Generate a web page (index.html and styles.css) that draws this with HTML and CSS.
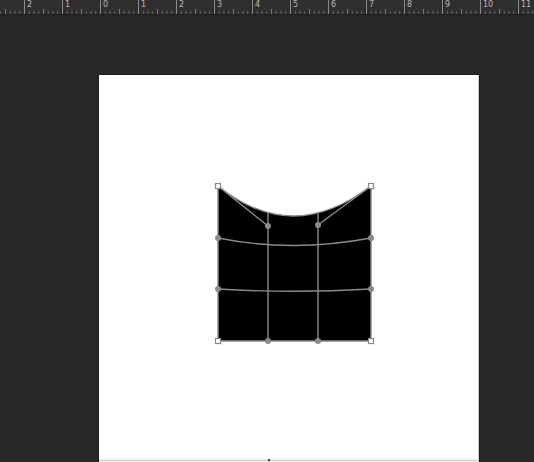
FILE: index.html
```html
<!DOCTYPE html>
<html>
<head>
<meta charset="utf-8">
<link rel="stylesheet" href="styles.css">
</head>
<body>
<div class="app">
  <div class="ruler">
    <div class="cell lead"></div>
    <div class="cell"><span>2</span></div>
    <div class="cell"><span>1</span></div>
    <div class="cell"><span>0</span></div>
    <div class="cell"><span>1</span></div>
    <div class="cell"><span>2</span></div>
    <div class="cell"><span>3</span></div>
    <div class="cell"><span>4</span></div>
    <div class="cell"><span>5</span></div>
    <div class="cell"><span>6</span></div>
    <div class="cell"><span>7</span></div>
    <div class="cell"><span>8</span></div>
    <div class="cell"><span>9</span></div>
    <div class="cell"><span>10</span></div>
    <div class="cell"><span>11</span></div>
  </div>
  <div class="workspace">
    <div class="page">
      <svg class="art" width="380" height="387" viewBox="0 0 380 387">
        <g transform="translate(-99,-75)">
          <path d="M218,186 C268,226 318,226 371,186 L371,341 L218,341 Z" fill="#000"/>
          <g fill="none" stroke="#8a8a8a" stroke-width="1.4">
            <path d="M218,186 C268,226 318,226 371,186"/>
            <path d="M218,238 C268,248 318,248 371,238"/>
            <path d="M218,289 C268,292 318,292 371,289"/>
            <path d="M218,186 L218,341 L371,341 L371,186"/>
            <path d="M268,212 L268,341"/>
            <path d="M318,212 L318,341"/>
            <path d="M218,186 L268,226"/>
            <path d="M371,186 L318,225"/>
          </g>
          <g fill="#8a8a8a">
            <circle cx="268" cy="226" r="3"/>
            <circle cx="318" cy="225" r="3"/>
            <circle cx="218" cy="238" r="3"/>
            <circle cx="371" cy="238" r="3"/>
            <circle cx="218" cy="289" r="3"/>
            <circle cx="371" cy="289" r="3"/>
            <circle cx="268" cy="341" r="3"/>
            <circle cx="318" cy="341" r="3"/>
          </g>
          <g fill="#fff" stroke="#8a8a8a" stroke-width="1.2">
            <rect x="215.5" y="183.5" width="5" height="5"/>
            <rect x="368.5" y="183.5" width="5" height="5"/>
            <rect x="215.5" y="338.5" width="5" height="5"/>
            <rect x="368.5" y="338.5" width="5" height="5"/>
          </g>
          <line x1="99" y1="460.5" x2="478" y2="460.5" stroke="#c9cec2" stroke-width="1.5"/>
          <circle cx="269" cy="460" r="1.2" fill="#444"/>
        </g>
      </svg>
    </div>
  </div>
</div>
</body>
</html>
```
FILE: styles.css
```css
html, body {
  margin: 0;
  padding: 0;
  background: #282828;
  overflow: hidden;
}
.app {
  width: 534px;
  height: 462px;
  display: flex;
  flex-direction: column;
  overflow: hidden;
}
.ruler {
  height: 14px;
  flex: none;
  display: flex;
  background-color: #2f2f2f;
  background-image:
    linear-gradient(to right, #7a7a7a 1px, transparent 1px),
    linear-gradient(to right, #6a6a6a 1px, transparent 1px);
  background-size: 38px 5px, 4.75px 3px;
  background-position: 5px 100%, 0.25px 100%;
  background-repeat: repeat-x, repeat-x;
  border-bottom: 1px solid #1e1e1e;
  font-family: "DejaVu Sans", sans-serif;
  font-size: 8px;
  color: #b8b8b8;
  overflow: hidden;
}
.cell {
  width: 37px;
  flex: none;
  border-left: 1px solid #8a8a8a;
  height: 14px;
}
.cell span {
  display: block;
  padding-left: 2px;
  line-height: 9px;
}
.cell.lead {
  width: 24px;
  border-left: none;
}
.workspace {
  flex: 1;
  padding-top: 60px;
  padding-left: 99px;
  background: #282828;
}
.page {
  width: 379px;
  height: 387px;
  background: #ffffff;
  box-shadow: 1px 0 0 #cfcfcf, 2px 0 0 #1a1a1a, 0 -1px 0 #1c1c1c, -1px 0 0 #1c1c1c;
}
.art {
  display: block;
}
```
